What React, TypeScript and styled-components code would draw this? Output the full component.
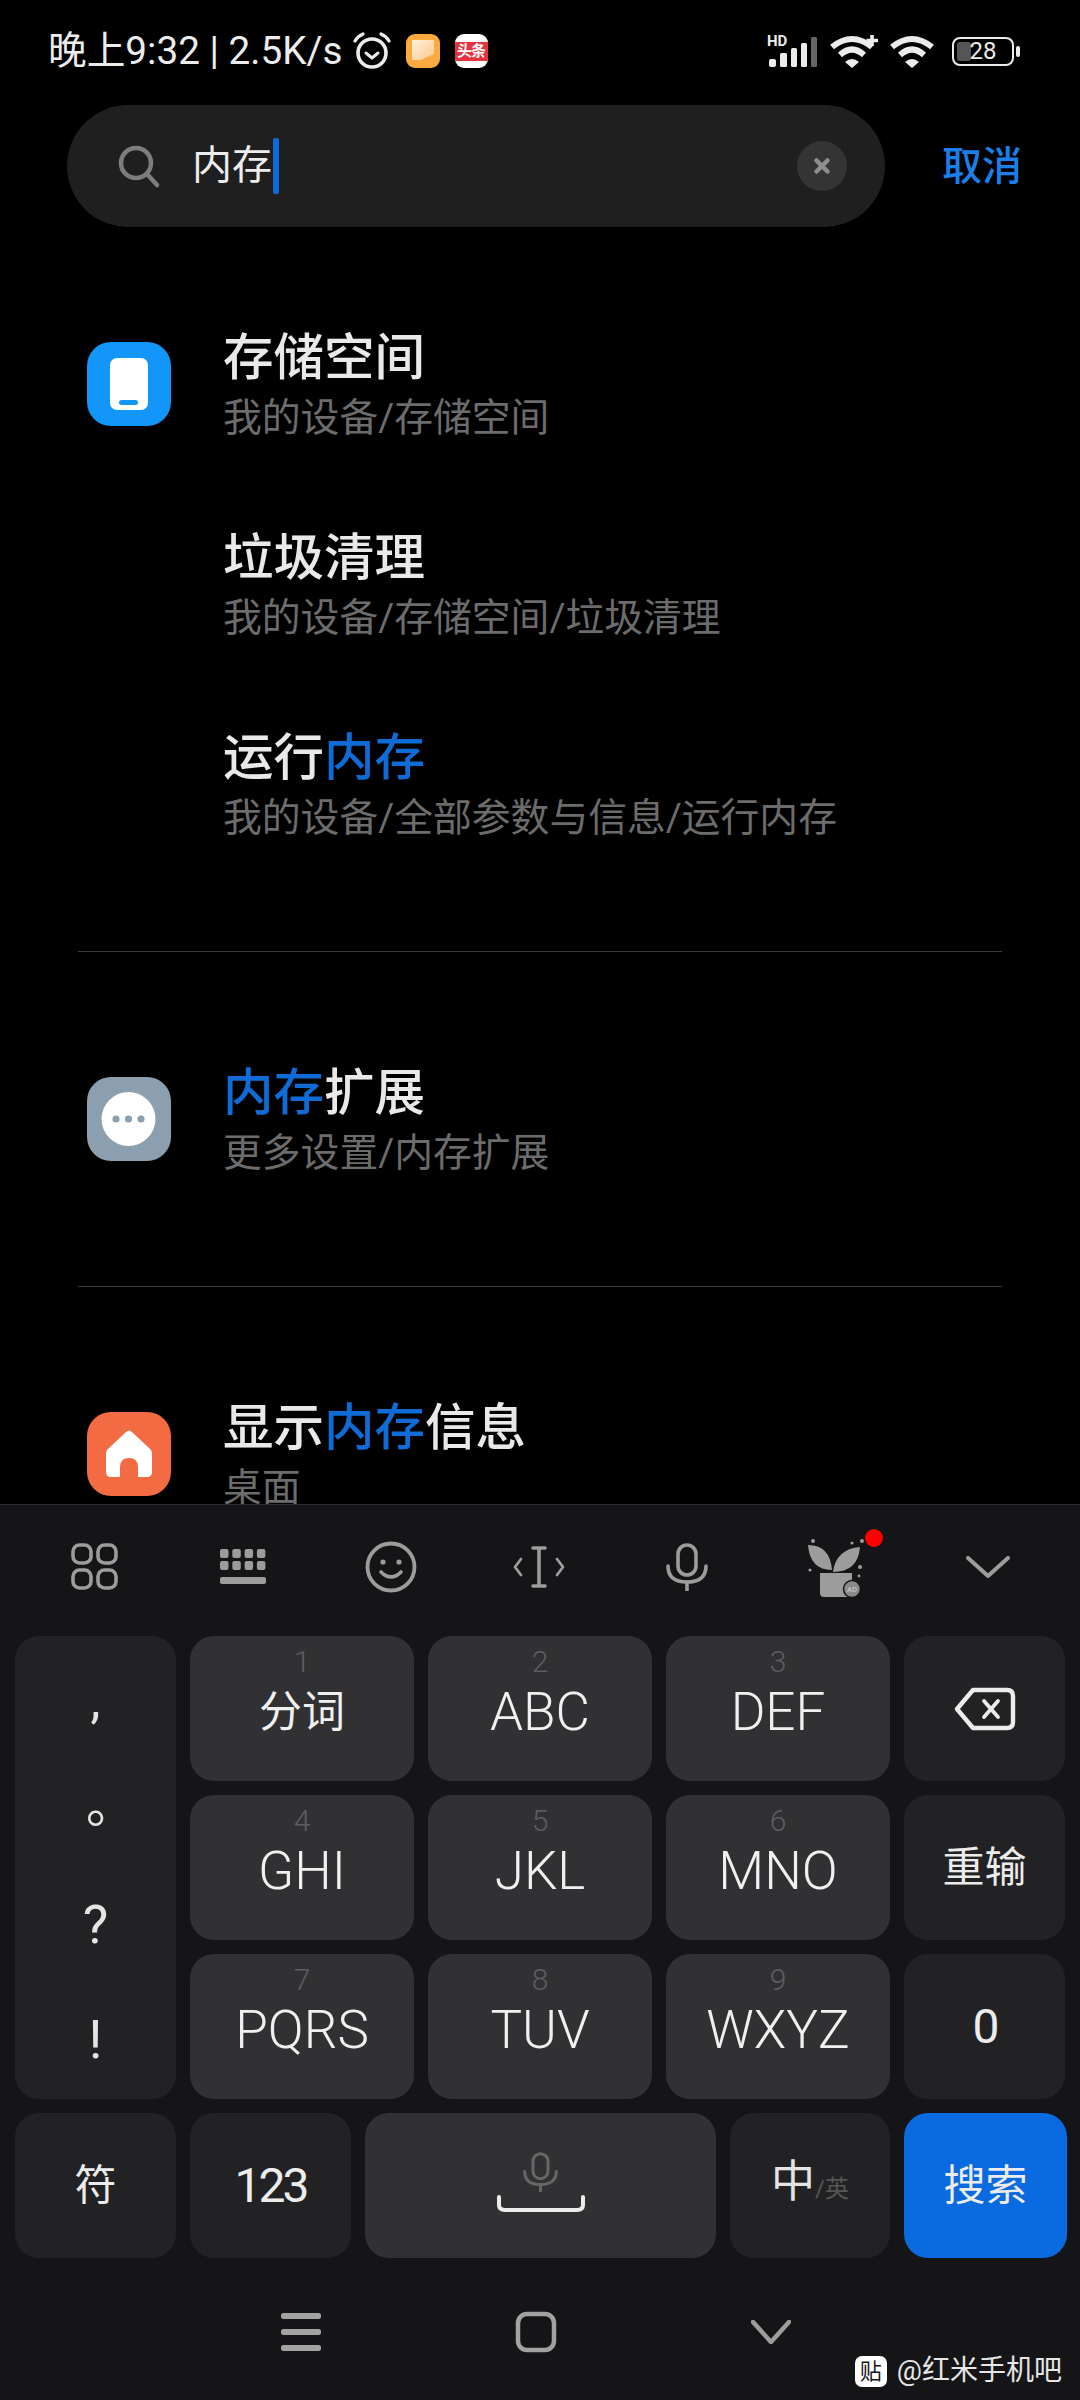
import * as React from "react";
import styled, { createGlobalStyle } from "styled-components";

const GlobalStyle = createGlobalStyle`
  html, body {
    margin: 0;
    padding: 0;
    background: #000;
  }
  body {
    font-family: Roboto, "Noto Sans CJK SC", sans-serif;
  }
`;

type Result = { title: React.ReactNode; path: string };

const storageResults: Result[] = [
  { title: "存储空间", path: "我的设备/存储空间" },
  { title: "垃圾清理", path: "我的设备/存储空间/垃圾清理" },
  { title: <>运行<Hit>内存</Hit></>, path: "我的设备/全部参数与信息/运行内存" },
];

function Hit({ children }: { children: React.ReactNode }) {
  return <HitText>{children}</HitText>;
}

const PhoneIcon = () => (
  <svg width="84" height="84" viewBox="0 0 84 84">
    <rect x="23" y="16" width="38" height="52" rx="7" fill="#fff" />
    <rect x="32" y="58" width="19" height="5" rx="2.5" fill="#1296fa" />
  </svg>
);

const MoreIcon = () => (
  <svg width="84" height="84" viewBox="0 0 84 84">
    <circle cx="41.5" cy="42" r="27" fill="#fff" />
    <circle cx="29" cy="42" r="3.6" fill="#8c9fae" />
    <circle cx="41.5" cy="42" r="3.6" fill="#8c9fae" />
    <circle cx="54" cy="42" r="3.6" fill="#8c9fae" />
  </svg>
);

const HomeIcon = () => (
  <svg width="84" height="84" viewBox="0 0 84 84">
    <path
      d="M39 20 Q42 17 45 20 L62 36 Q65 38 65 42 V60 Q65 65 60 65 H51 V55 Q51 46 42 46 Q33 46 33 55 V65 H24 Q19 65 19 60 V42 Q19 38 22 36 Z"
      fill="#fff"
    />
  </svg>
);

const SearchGlass = () => (
  <svg width="44" height="44" viewBox="0 0 44 44" fill="none" stroke="#7d7d7d" strokeLinecap="round">
    <circle cx="19" cy="19" r="15" strokeWidth="4.5" />
    <path d="M30 30 L40 41" strokeWidth="4.5" />
  </svg>
);

const ClearIcon = () => (
  <svg width="50" height="50" viewBox="0 0 50 50">
    <circle cx="25" cy="25" r="25" fill="#343434" />
    <path d="M19.5 19.5 L30.5 30.5 M30.5 19.5 L19.5 30.5" stroke="#8e8e8e" strokeWidth="4.5" strokeLinecap="round" />
  </svg>
);

const AlarmIcon = () => (
  <svg width="38" height="38" viewBox="0 0 38 38" fill="none" stroke="#ececec">
    <circle cx="19" cy="21" r="14" strokeWidth="3.6" />
    <path d="M13 21 L19 26 L25 21" strokeWidth="3" strokeLinecap="round" strokeLinejoin="round" />
    <path d="M2 9 Q5 4 10 2" strokeWidth="3.2" strokeLinecap="round" />
    <path d="M36 9 Q33 4 28 2" strokeWidth="3.2" strokeLinecap="round" />
  </svg>
);

const NotesIcon = () => (
  <svg width="34" height="34" viewBox="0 0 34 34">
    <defs>
      <linearGradient id="notesSheet" x1="0" y1="0" x2="1" y2="1">
        <stop offset="0" stopColor="#fff1dc" />
        <stop offset="1" stopColor="#fbc98a" />
      </linearGradient>
    </defs>
    <rect width="34" height="34" rx="9" fill="#fbaa3f" />
    <path d="M6 6 H28 V20 L15 26 H6 Z" fill="url(#notesSheet)" />
  </svg>
);

const SignalBars = () => (
  <svg width="50" height="34" viewBox="0 0 50 34">
    <rect x="2" y="25" width="7" height="8" rx="2" fill="#ececec" />
    <rect x="13" y="19" width="7" height="14" rx="1.5" fill="#ececec" />
    <rect x="24" y="14" width="6" height="19" rx="1.5" fill="#ececec" />
    <rect x="34" y="9" width="6" height="24" rx="1.5" fill="#ececec" />
    <rect x="44" y="3" width="6" height="30" rx="1.5" fill="#666" />
  </svg>
);

const WifiIcon = ({ plus }: { plus?: boolean }) => (
  <svg width={plus ? 50 : 46} height="34" viewBox={plus ? "0 0 50 34" : "0 0 46 34"} fill="none" stroke="#ececec">
    <path d="M3 13 Q23 -3 43 13" strokeWidth="6" />
    <path d="M11 21 Q23 10 35 21" strokeWidth="6" />
    <path d="M16 28 Q23 22 30 28 L23 34 Z" fill="#ececec" stroke="none" />
    {plus && <path d="M43 1 V12 M37.5 6.5 H49" strokeWidth="3.6" />}
  </svg>
);

const GridMenuIcon = () => (
  <svg width="48" height="48" viewBox="0 0 48 48" fill="none" stroke="#9c9c9c" strokeWidth="3.6">
    <rect x="2" y="2" width="18" height="18" rx="6.5" />
    <rect x="27" y="2" width="18" height="18" rx="6.5" />
    <rect x="2" y="27" width="18" height="18" rx="6.5" />
    <rect x="27" y="27" width="18" height="18" rx="6.5" />
  </svg>
);

const KeyboardIcon = () => (
  <svg width="48" height="36" viewBox="0 0 48 36" fill="#9c9c9c">
    {[0, 1].map((r) =>
      [0, 1, 2, 3].map((c) => (
        <rect key={`${r}-${c}`} x={1 + c * 12.3} y={r * 12} width="8.5" height="9" rx="2" />
      ))
    )}
    <rect x="1" y="28" width="46" height="7" rx="2" />
  </svg>
);

const SmileIcon = () => (
  <svg width="52" height="52" viewBox="0 0 52 52" fill="none" stroke="#9c9c9c">
    <circle cx="26" cy="26" r="23.5" strokeWidth="3.8" />
    <circle cx="18" cy="21" r="2.6" fill="#9c9c9c" stroke="none" />
    <circle cx="34" cy="21" r="2.6" fill="#9c9c9c" stroke="none" />
    <path d="M16 31 Q26 41 36 31" strokeWidth="3.6" strokeLinecap="round" />
  </svg>
);

const CursorIcon = () => (
  <svg width="52" height="44" viewBox="0 0 52 44" fill="none" stroke="#9c9c9c" strokeLinecap="round" strokeLinejoin="round">
    <path d="M26 3 V41 M20 3 H32 M20 41 H32" strokeWidth="3.6" />
    <path d="M8 14 L2 22 L8 30 M44 14 L50 22 L44 30" strokeWidth="2.8" />
  </svg>
);

const MicIcon = ({ size = 48, color = "#9c9c9c" }: { size?: number; color?: string }) => (
  <svg width={size * 0.875} height={size} viewBox="0 0 42 48" fill="none" stroke={color} strokeWidth="3.6" strokeLinecap="round">
    <rect x="12" y="2" width="18" height="30" rx="9" />
    <path d="M2 23 Q2 39 21 39 Q40 39 40 23" />
    <path d="M21 39 V47" />
  </svg>
);

const PlantIcon = () => (
  <svg width="70" height="70" viewBox="0 0 70 70">
    <g fill="#9c9c9c">
      <path d="M8 13 Q30 13 32 38 Q10 38 8 13 Z" />
      <path d="M60 15 Q36 17 33 40 Q58 40 60 15 Z" />
      <path d="M20 41 H52 V62 Q52 65 49 65 H24 Q20 65 20 61 Z" />
      <circle cx="13" cy="9" r="2" />
      <circle cx="52" cy="11" r="1.6" />
      <circle cx="62" cy="9" r="2" />
      <circle cx="10" cy="38" r="1.6" />
      <circle cx="60" cy="35" r="2" />
      <circle cx="59" cy="44" r="1.4" />
    </g>
    <circle cx="52" cy="57" r="8.5" fill="#8a8a8a" stroke="#151517" strokeWidth="1.5" />
    <text x="52" y="60" textAnchor="middle" fontFamily="Roboto, sans-serif" fontSize="8" fontWeight="700" fill="#bdbdbd">AD</text>
  </svg>
);

const ChevronIcon = ({ width = 44, height = 22, stroke = 4 }: { width?: number; height?: number; stroke?: number }) => (
  <svg width={width} height={height} viewBox={`0 0 ${width} ${height}`} fill="none" stroke="#9c9c9c" strokeWidth={stroke} strokeLinecap="round" strokeLinejoin="round">
    <path d={`M2 2 L${width / 2} ${height - 2} L${width - 2} 2`} />
  </svg>
);

const BackspaceIcon = () => (
  <svg width="62" height="44" viewBox="0 0 62 44" fill="none" stroke="#ececec" strokeWidth="4.4" strokeLinejoin="round" strokeLinecap="round">
    <path d="M19 3 H53 Q59 3 59 9 V35 Q59 41 53 41 H19 L3 22 Z" />
    <path d="M30 14 L44 30 M44 14 L30 30" strokeWidth="3.8" />
  </svg>
);

const SpaceMark = () => (
  <svg width="88" height="18" viewBox="0 0 88 18" fill="none" stroke="#ececec" strokeWidth="4" strokeLinecap="round">
    <path d="M2 2 V10 Q2 15 8 15 H80 Q86 15 86 10 V2" />
  </svg>
);

const NavMenuIcon = () => (
  <svg width="40" height="38" viewBox="0 0 40 38" fill="#a2a2a2">
    <rect y="0" width="40" height="6" rx="2.5" />
    <rect y="16" width="40" height="6" rx="2.5" />
    <rect y="32" width="40" height="6" rx="2.5" />
  </svg>
);

const NavHomeIcon = () => (
  <svg width="42" height="42" viewBox="0 0 42 42" fill="none" stroke="#a2a2a2" strokeWidth="4.5">
    <rect x="3" y="3" width="36" height="36" rx="9" />
  </svg>
);

export default function App() {
  return (
    <Page>
      <GlobalStyle />
      <Content>
        <StatusBar>
          <StatusLeft>
            <Clock>晚上9:32 | 2.5K/s</Clock>
            <AlarmIcon />
            <NotesIcon />
            <NewsBadge><span>头条</span></NewsBadge>
          </StatusLeft>
          <StatusRight>
            <Signal>
              <HdMark>HD</HdMark>
              <SignalBars />
            </Signal>
            <WifiIcon plus />
            <WifiIcon />
            <Battery>
              <BatteryBody>
                <BatteryFill />
                <BatteryText>28</BatteryText>
              </BatteryBody>
              <BatteryCap />
            </Battery>
          </StatusRight>
        </StatusBar>

        <SearchRow>
          <SearchBox>
            <SearchGlass />
            <SearchText>内存</SearchText>
            <Caret />
            <ClearSlot><ClearIcon /></ClearSlot>
          </SearchBox>
          <Cancel>取消</Cancel>
        </SearchRow>

        <Section $top={61}>
          {storageResults.map((r, i) => (
            <Row key={r.path}>
              <IconSlot $bg={i === 0 ? "#1296fa" : undefined}>{i === 0 && <PhoneIcon />}</IconSlot>
              <RowText>
                <Title>{r.title}</Title>
                <Path>{r.path}</Path>
              </RowText>
            </Row>
          ))}
        </Section>
        <Section $top={71}>
          <Row>
            <IconSlot $bg="#8c9fae"><MoreIcon /></IconSlot>
            <RowText>
              <Title><Hit>内存</Hit>扩展</Title>
              <Path>更多设置/内存扩展</Path>
            </RowText>
          </Row>
        </Section>
        <Section $top={71} $last>
          <Row>
            <IconSlot $bg="#f26b43"><HomeIcon /></IconSlot>
            <RowText>
              <Title>显示<Hit>内存</Hit>信息</Title>
              <Path>桌面</Path>
            </RowText>
          </Row>
        </Section>
      </Content>

      <Keyboard>
        <Toolbar>
          <ToolSlot><GridMenuIcon /></ToolSlot>
          <ToolSlot><KeyboardIcon /></ToolSlot>
          <ToolSlot><SmileIcon /></ToolSlot>
          <ToolSlot><CursorIcon /></ToolSlot>
          <ToolSlot><MicIcon /></ToolSlot>
          <ToolSlot>
            <PlantWrap>
              <PlantIcon />
              <RedDot />
            </PlantWrap>
          </ToolSlot>
          <ToolSlot $nudge={5}><ChevronIcon /></ToolSlot>
        </Toolbar>

        <KeyGrid>
          <PunctKey>
            <Punct $h={115}>,</Punct>
            <Punct $h={110} $fullWidth>。</Punct>
            <Punct $h={115} $big>?</Punct>
            <Punct $h={100} $big>!</Punct>
          </PunctKey>
          <NineKey hint="1" label="分词" cjk />
          <NineKey hint="2" label="ABC" />
          <NineKey hint="3" label="DEF" />
          <Key $tone="dark"><BackspaceIcon /></Key>
          <NineKey hint="4" label="GHI" />
          <NineKey hint="5" label="JKL" />
          <NineKey hint="6" label="MNO" />
          <Key $tone="dark"><SideLabel>重输</SideLabel></Key>
          <NineKey hint="7" label="PQRS" />
          <NineKey hint="8" label="TUV" />
          <NineKey hint="9" label="WXYZ" />
          <Key $tone="dark"><NumberLabel>0</NumberLabel></Key>
        </KeyGrid>

        <BottomRow>
          <Key $tone="dark" $width={161}><SideLabel>符</SideLabel></Key>
          <Key $tone="dark" $width={161}><NumberLabel>123</NumberLabel></Key>
          <Key $tone="light" $width={351}>
            <SpaceStack>
              <MicIcon size={40} color="#666" />
              <SpaceMark />
            </SpaceStack>
          </Key>
          <Key $tone="dark" $width={160}>
            <SwitchLabel>中<small>/英</small></SwitchLabel>
          </Key>
          <Key $tone="blue" $width={163}><SideLabel>搜索</SideLabel></Key>
        </BottomRow>

        <NavBar>
          <NavSlot><NavMenuIcon /></NavSlot>
          <NavSlot><NavHomeIcon /></NavSlot>
          <NavSlot><ChevronIcon width={40} height={24} stroke={4.5} /></NavSlot>
        </NavBar>

        <Watermark>
          <WatermarkLogo>贴</WatermarkLogo>
          <span>@红米手机吧</span>
        </Watermark>
      </Keyboard>
    </Page>
  );
}

function NineKey({ hint, label, cjk }: { hint: string; label: string; cjk?: boolean }) {
  return (
    <Key $tone="light" $stacked>
      <Hint>{hint}</Hint>
      <Label $cjk={cjk}>{label}</Label>
    </Key>
  );
}

const Page = styled.div`
  position: relative;
  width: 1080px;
  height: 2400px;
  display: flex;
  flex-direction: column;
  overflow: hidden;
  background: #000;
  color: #e9e9e9;
`;

const Content = styled.div`
  height: 1504px;
  flex: none;
  overflow: hidden;
`;

const StatusBar = styled.div`
  height: 102px;
  display: flex;
  align-items: center;
  justify-content: space-between;
  padding: 0 60px 0 48px;
`;

const StatusLeft = styled.div`
  display: flex;
  align-items: center;
  gap: 15px;
`;

const Clock = styled.span`
  font-size: 38.7px;
  line-height: 40px;
  color: #ececec;
  margin-right: -5px;
  white-space: nowrap;
`;

const NewsBadge = styled.div`
  width: 33px;
  height: 34px;
  border-radius: 9px;
  background: #fff;
  display: flex;
  align-items: center;
  overflow: hidden;

  span {
    width: 100%;
    height: 19px;
    background: #e5333f;
    color: #fff;
    font-size: 15px;
    line-height: 19px;
    font-weight: 700;
    text-align: center;
    white-space: nowrap;
    letter-spacing: -1px;
  }
`;

const StatusRight = styled.div`
  display: flex;
  align-items: center;
  gap: 10px;
`;

const Signal = styled.div`
  position: relative;
  display: flex;
  margin-right: 2px;
`;

const HdMark = styled.span`
  position: absolute;
  left: 0;
  top: -1px;
  font-size: 15px;
  line-height: 16px;
  font-weight: 700;
  color: #ececec;
`;

const Battery = styled.div`
  display: flex;
  align-items: center;
  margin-left: 7px;
  gap: 2px;
`;

const BatteryBody = styled.div`
  position: relative;
  box-sizing: border-box;
  width: 62px;
  height: 29px;
  border: 2.5px solid #ececec;
  border-radius: 8px;
  display: flex;
  align-items: center;
  justify-content: center;
`;

const BatteryFill = styled.div`
  position: absolute;
  left: 3px;
  top: 3px;
  bottom: 3px;
  width: 14px;
  border-radius: 3px;
  background: #555;
`;

const BatteryText = styled.span`
  position: relative;
  font-size: 24px;
  line-height: 24px;
  color: #ececec;
`;

const BatteryCap = styled.div`
  width: 4px;
  height: 11px;
  border-radius: 2px;
  background: #ececec;
`;

const SearchRow = styled.div`
  margin-top: 3px;
  display: flex;
  align-items: center;
  padding-left: 67px;
`;

const SearchBox = styled.div`
  width: 818px;
  height: 122px;
  box-sizing: border-box;
  padding: 0 38px 0 50px;
  border-radius: 61px;
  background: #1f1f1f;
  display: flex;
  align-items: center;
`;

const SearchText = styled.span`
  margin-left: 31px;
  font-size: 40px;
  line-height: 56px;
  color: #ededed;
`;

const Caret = styled.span`
  width: 6px;
  height: 56px;
  margin-left: 1px;
  border-radius: 2px;
  background: #0d6ad6;
`;

const ClearSlot = styled.span`
  margin-left: auto;
  display: flex;
`;

const Cancel = styled.span`
  margin-left: 57px;
  padding-top: 2px;
  font-size: 40px;
  line-height: 56px;
  font-weight: 500;
  color: #1a7fe8;
`;

const Section = styled.div<{ $top: number; $last?: boolean }>`
  margin: 0 78px;
  padding-top: ${(p) => p.$top}px;
  padding-bottom: ${(p) => (p.$last ? 0 : 63)}px;
  border-bottom: ${(p) => (p.$last ? "none" : "1px solid #3a3a3a")};
`;

const Row = styled.div`
  height: 200px;
  display: flex;
  align-items: center;
  padding-left: 9px;
`;

const IconSlot = styled.div<{ $bg?: string }>`
  width: 84px;
  height: 84px;
  flex: none;
  margin-right: 52px;
  margin-bottom: 8px;
  border-radius: 24px;
  background: ${(p) => p.$bg ?? "transparent"};
  display: flex;
`;

const RowText = styled.div`
  display: flex;
  flex-direction: column;
`;

const Title = styled.div`
  font-size: 50.5px;
  line-height: 60px;
  font-weight: 500;
  color: #e9e9e9;
`;

const HitText = styled.span`
  color: #0f6cd6;
`;

const Path = styled.div`
  font-size: 38.8px;
  line-height: 60px;
  color: #6c6c6c;
  white-space: nowrap;
`;

const Keyboard = styled.div`
  position: relative;
  flex: 1;
  box-sizing: border-box;
  background: #151517;
  border-top: 1px solid #2c2c2e;
`;

const Toolbar = styled.div`
  height: 131px;
  box-sizing: border-box;
  display: flex;
  align-items: center;
  padding: 0 0 7px 21px;
`;

const ToolSlot = styled.div<{ $nudge?: number }>`
  width: 148px;
  flex: none;
  display: flex;
  justify-content: center;
  padding-left: ${(p) => p.$nudge ?? 0}px;
`;

const PlantWrap = styled.div`
  position: relative;
  width: 70px;
  height: 70px;
`;

const RedDot = styled.span`
  position: absolute;
  left: 65px;
  top: -3px;
  width: 18px;
  height: 18px;
  border-radius: 50%;
  background: #ff0000;
`;

const KeyGrid = styled.div`
  display: grid;
  grid-template-columns: 161px 224px 224px 224px 161px;
  grid-auto-rows: 145px;
  gap: 14px;
  padding-left: 15px;
`;

const toneColors = {
  light: "#313134",
  dark: "#222224",
  blue: "#0a6ae0",
};

const Key = styled.div<{ $tone: keyof typeof toneColors; $width?: number; $stacked?: boolean }>`
  box-sizing: border-box;
  border-radius: 24px;
  background: ${(p) => toneColors[p.$tone]};
  width: ${(p) => (p.$width ? `${p.$width}px` : "auto")};
  flex: none;
  display: flex;
  flex-direction: column;
  align-items: center;
  justify-content: ${(p) => (p.$stacked ? "flex-start" : "center")};
  padding-top: ${(p) => (p.$stacked ? "11px" : 0)};
`;

const PunctKey = styled.div`
  grid-row: span 3;
  border-radius: 24px;
  background: #222224;
  display: flex;
  flex-direction: column;
  padding-top: 14px;
  align-items: center;
`;

// the TC cut of the font centres the full-width stop inside its cell
const Punct = styled.div<{ $h: number; $big?: boolean; $fullWidth?: boolean }>`
  height: ${(p) => p.$h}px;
  font-family: ${(p) => (p.$fullWidth ? '"Noto Sans CJK TC", sans-serif' : "inherit")};
  font-size: ${(p) => (p.$big ? 54 : 50)}px;
  line-height: 100px;
  color: #e4e4e4;
`;

const Hint = styled.div`
  font-size: 30px;
  line-height: 30px;
  font-weight: 300;
  color: #5d5d61;
`;

const Label = styled.div<{ $cjk?: boolean }>`
  margin-top: 5px;
  font-size: ${(p) => (p.$cjk ? 43 : 53)}px;
  line-height: 60px;
  font-weight: ${(p) => (p.$cjk ? 400 : 300)};
  color: #f0f0f0;
`;

const NumberLabel = styled.div`
  font-size: 48px;
  line-height: 60px;
  letter-spacing: -3px;
  color: #ececec;
`;

const SideLabel = styled.div`
  font-size: 42px;
  line-height: 60px;
  color: #ececec;
`;

const SwitchLabel = styled.div`
  font-size: 44px;
  line-height: 60px;
  color: #e4e4e4;

  small {
    font-size: 24px;
    color: #555;
  }
`;

const BottomRow = styled.div`
  display: flex;
  gap: 14px;
  height: 145px;
  margin-top: 14px;
  padding-left: 15px;
`;

const SpaceStack = styled.div`
  display: flex;
  flex-direction: column;
  align-items: center;
  gap: 3px;
  margin-bottom: 6px;
`;

const NavBar = styled.div`
  display: flex;
  justify-content: center;
  padding: 53px 8px 0 0;
`;

const NavSlot = styled.div`
  width: 235px;
  height: 42px;
  display: flex;
  align-items: center;
  justify-content: center;
`;

const Watermark = styled.div`
  position: absolute;
  right: 18px;
  bottom: 12px;
  display: flex;
  align-items: center;
  gap: 10px;
  font-size: 28px;
  line-height: 34px;
  color: #e6e6e6;
`;

const WatermarkLogo = styled.span`
  width: 32px;
  height: 31px;
  border-radius: 7px;
  background: #fff;
  color: #151517;
  font-size: 22px;
  line-height: 31px;
  text-align: center;
`;
